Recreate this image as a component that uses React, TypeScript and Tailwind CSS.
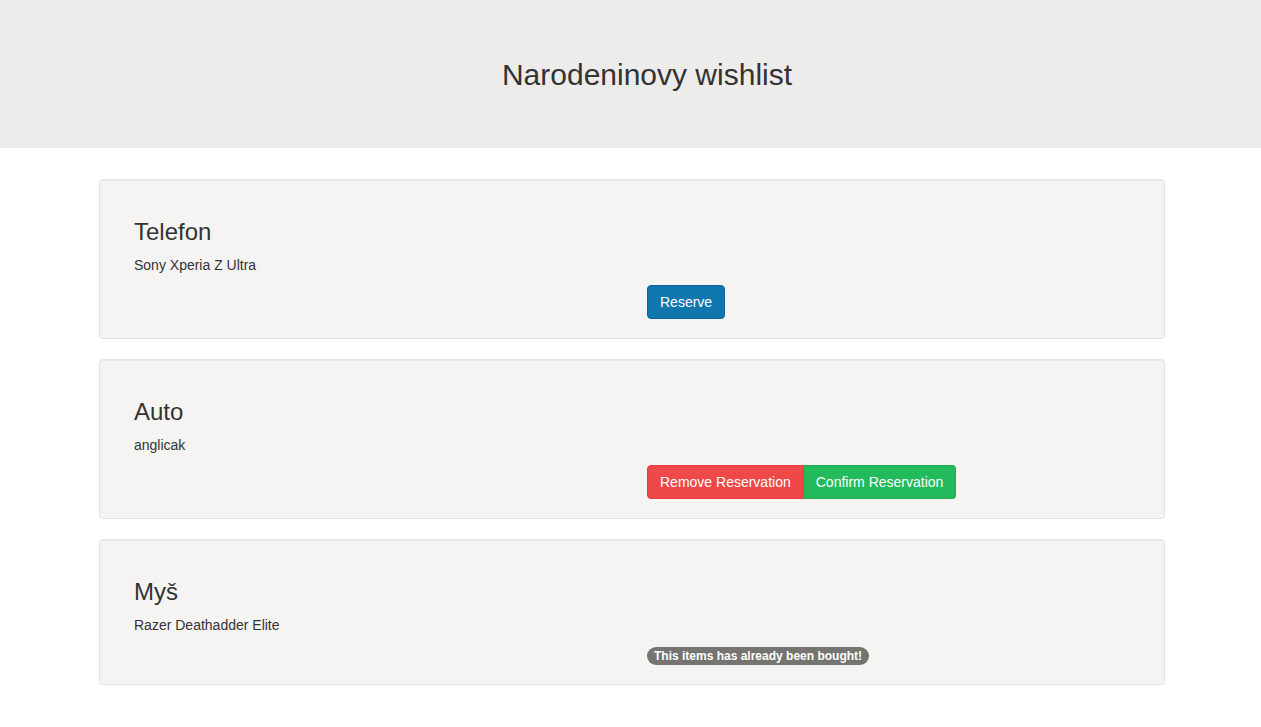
import React from 'react';

type Item = {
  name: string;
  desc: string;
  state: 'free' | 'reserved' | 'bought';
};

const items: Item[] = [
  { name: 'Telefon', desc: 'Sony Xperia Z Ultra', state: 'free' },
  { name: 'Auto', desc: 'anglicak', state: 'reserved' },
  { name: 'Myš', desc: 'Razer Deathadder Elite', state: 'bought' },
];

function Actions({ state }: { state: Item['state'] }) {
  if (state === 'free') {
    return (
      <div className="flex">
        <button className="h-[34px] px-[12px] rounded-[4px] border border-[#0b679b] bg-[#0f76ae] text-white text-[14px] leading-[20px]">
          Reserve
        </button>
      </div>
    );
  }
  if (state === 'reserved') {
    return (
      <div className="flex">
        <button className="h-[34px] px-[12px] rounded-l-[4px] border border-[#e83b3b] bg-[#ef4848] text-white text-[14px] leading-[20px]">
          Remove Reservation
        </button>
        <button className="h-[34px] px-[12px] rounded-r-[4px] border border-l-0 border-[#1eaa52] bg-[#22ba5b] text-white text-[14px] leading-[20px]">
          Confirm Reservation
        </button>
      </div>
    );
  }
  return (
    <div className="h-[20px] flex items-center">
      <span className="inline-block mt-[2px] px-[7px] py-[3px] rounded-[10px] bg-[#767470] text-white text-[12px] font-bold leading-[12px]">
        This items has already been bought!
      </span>
    </div>
  );
}

export default function App() {
  return (
    <div className="min-h-screen bg-white text-[#333333] font-['Liberation_Sans',Arial,sans-serif]">
      <header className="h-[148px] bg-[#eeeceb] flex items-center justify-center pl-[33px] pt-[1px] pb-[1px]">
        <h1 className="text-[30px] leading-[33px] font-normal">Narodeninovy wishlist</h1>
      </header>

      <main className="ml-[99px] w-[1066px] pt-[31px] flex flex-col gap-[20px]">
        {items.map((item) => (
          <div
            key={item.name}
            className="bg-[#f5f4f3] border border-[#e3e3e3] rounded-[4px] shadow-[inset_0_1px_1px_rgba(0,0,0,0.05)] px-[34px] pt-[39px] pb-[19px]"
          >
            <h3 className="text-[24px] leading-[26px] font-normal">{item.name}</h3>
            <p className="mt-[10px] text-[14px] leading-[20px]">{item.desc}</p>
            <div className="mt-[10px] pl-[513px]">
              <Actions state={item.state} />
            </div>
          </div>
        ))}
      </main>
    </div>
  );
}
